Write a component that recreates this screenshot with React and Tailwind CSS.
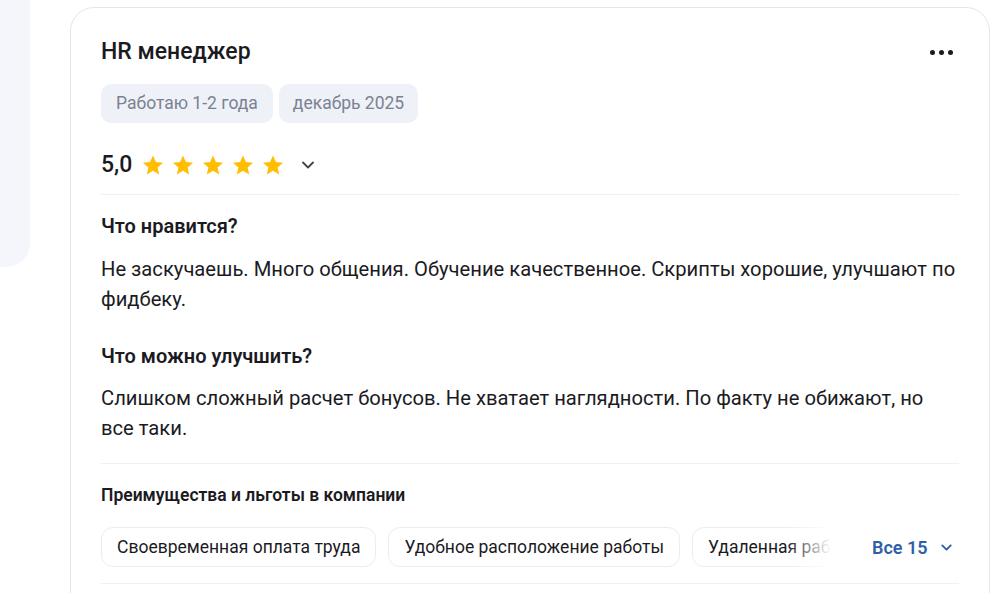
import { ChevronDown } from 'lucide-react';

function Star() {
  return (
    <svg viewBox="0 0 24 24" className="w-[24px] h-[24px]" fill="#ffbf00">
      <path d="M12 2.5l2.9 6.6 7.1.6-5.4 4.7 1.6 7-6.2-3.7-6.2 3.7 1.6-7L2 9.7l7.1-.6z" />
    </svg>
  );
}

export default function App() {
  const perks = ['Своевременная оплата труда', 'Удобное расположение работы', 'Удаленная работа', 'ДМС'];

  return (
    <div className="w-[1001px] h-[593px] overflow-hidden bg-white flex items-start" style={{ fontFamily: 'Roboto, "Noto Sans", sans-serif' }}>
      {/* left column stub */}
      <div className="w-[30px] h-[267px] bg-[#f4f6fb] rounded-br-[24px] flex-shrink-0" />

      {/* review card */}
      <div className="ml-[40px] mt-[7px] w-[920px] border border-[#e2e6ee] rounded-[24px] pl-[30px] pr-[30px] pt-[30px] pb-8 text-[#1b1b1f]">
        <div className="flex items-center justify-between">
          <h2 className="text-[23px] leading-7 font-medium">HR менеджер</h2>
          <div className="flex items-center gap-[4px] mr-[6px]">
            <span className="w-[5px] h-[5px] rounded-full bg-[#1b1b1f]" />
            <span className="w-[5px] h-[5px] rounded-full bg-[#1b1b1f]" />
            <span className="w-[5px] h-[5px] rounded-full bg-[#1b1b1f]" />
          </div>
        </div>

        <div className="flex gap-[6px] mt-[18px]">
          <span className="h-[39px] px-[15px] flex items-center rounded-[10px] bg-[#eef1f7] text-[#7a8291] text-[17.5px]">Работаю 1-2 года</span>
          <span className="h-[39px] px-[14px] flex items-center rounded-[10px] bg-[#eef1f7] text-[#7a8291] text-[17.5px]">декабрь 2025</span>
        </div>

        <div className="flex items-center h-[28px] mt-[28px]">
          <span className="text-[23px] font-medium mr-[9px]">5,0</span>
          <div className="flex gap-[6px]">
            <Star /><Star /><Star /><Star /><Star />
          </div>
          <ChevronDown className="w-[20px] h-[20px] ml-[13px] text-[#444]" strokeWidth={2.2} />
        </div>

        <div className="border-t border-[#eef0f4] mt-[15px]" />

        <h3 className="text-[20px] leading-6 font-semibold mt-[19px]">Что нравится?</h3>
        <p className="text-[20.2px] leading-[30px] mt-[16px]">
          Не заскучаешь. Много общения. Обучение качественное. Скрипты хорошие, улучшают по фидбеку.
        </p>

        <h3 className="text-[20px] leading-6 font-semibold mt-[30px]">Что можно улучшить?</h3>
        <p className="text-[20.2px] leading-[30px] mt-[15px]">
          Слишком сложный расчет бонусов. Не хватает наглядности. По факту не обижают, но все таки.
        </p>

        <div className="border-t border-[#eef0f4] mt-[20px]" />

        <h4 className="text-[17.5px] leading-5 font-semibold mt-[21px]">Преимущества и льготы в компании</h4>

        <div className="flex items-center mt-[22px]">
          <div className="relative w-[730px] overflow-hidden flex-shrink-0">
            <div className="flex gap-[12px]">
              {perks.map((p) => (
                <span key={p} className="h-[40px] px-[15px] flex items-center border border-[#e9ecf2] rounded-[12px] text-[17.5px] whitespace-nowrap flex-shrink-0">
                  {p}
                </span>
              ))}
            </div>
            <div className="absolute right-0 top-0 h-full w-[45px] bg-gradient-to-r from-white/0 to-white" />
          </div>
          <button className="ml-[41px] flex items-center gap-[10px] text-[#2f5fa7] text-[18px] font-semibold">
            Все 15
            <ChevronDown className="w-[17px] h-[17px]" strokeWidth={2.6} />
          </button>
        </div>

        <div className="border-t border-[#eef0f4] mt-[16px]" />
      </div>
    </div>
  );
}
